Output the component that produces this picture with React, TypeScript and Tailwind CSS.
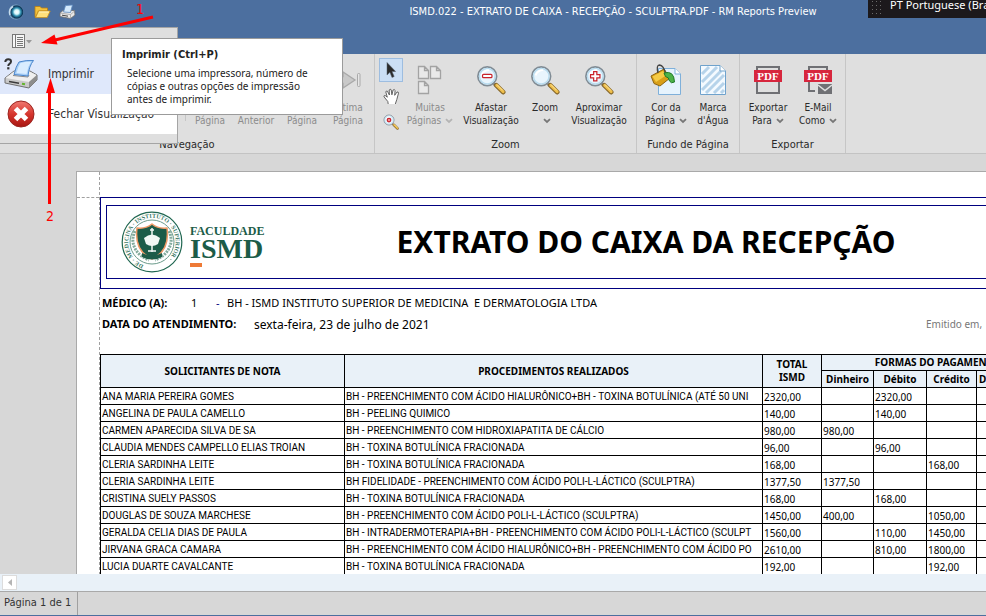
import type { ReactNode } from "react";

const UI = "font-['DejaVu_Sans_Condensed','DejaVu_Sans',sans-serif]";
const REPORT = "font-['Noto_Sans','Open_Sans',sans-serif]";

/* ---------- icons ---------- */

function Chevron({ muted = false }: { muted?: boolean }) {
  return (
    <svg width="8" height="6" viewBox="0 0 8 6" className="ml-1 inline-block" aria-hidden="true">
      <path d="M1 1.2L4 4L7 1.2" fill="none" stroke={muted ? "#b4b4b4" : "#777"} strokeWidth="1.8" />
    </svg>
  );
}

function OrbIcon() {
  return (
    <svg width="16" height="16" viewBox="0 0 16 16" aria-hidden="true">
      <defs>
        <radialGradient id="orb" cx="0.55" cy="0.5" r="0.5">
          <stop offset="0" stopColor="#fff" />
          <stop offset="0.3" stopColor="#d4f6fb" />
          <stop offset="0.55" stopColor="#2f8fae" />
          <stop offset="0.8" stopColor="#0d3558" />
          <stop offset="1" stopColor="#7fa8c8" />
        </radialGradient>
      </defs>
      <circle cx="8" cy="8" r="7.5" fill="url(#orb)" />
      <path d="M2 11Q0.500 5 5 2.500" fill="none" stroke="#c8dcec" strokeWidth="1.500" />
    </svg>
  );
}

function FolderIcon() {
  return (
    <svg width="17" height="16" viewBox="0 0 17 16" aria-hidden="true">
      <path d="M1 13V2.5H6L7.5 4H13.5V7H4.5L1.5 13.5Z" fill="#f3c23c" stroke="#b97f12" strokeWidth="0.8" />
      <path d="M4.5 7H16.2L13.2 13.6H1.6Z" fill="#ffe07a" stroke="#c98f1a" strokeWidth="0.8" />
      <path d="M5 8H14.8" stroke="#fff4c2" />
    </svg>
  );
}

function SmallPrinterIcon() {
  return (
    <svg width="17" height="16" viewBox="0 0 17 16" aria-hidden="true">
      <path d="M1 9L4 6.5H15.5L16 11L11.5 14.5L1 12.5Z" fill="#e8e8e8" stroke="#6d6d6d" strokeWidth="0.8" />
      <path d="M6.5 1.5L13.500 1L11.500 8.500L4.500 8Z" fill="#d5eafc" stroke="#5c88bd" strokeWidth="0.8" />
      <path d="M1 9L11.5 10.6L15.6 7M11.5 10.6V14.3" fill="none" stroke="#9a9a9a" strokeWidth="0.7" />
      <path d="M3 11.2L9 12.2" stroke="#444" />
    </svg>
  );
}

function PrinterIcon() {
  return (
    <svg width="34" height="32" viewBox="0 0 34 32" aria-hidden="true">
      <path d="M1 20L10 13H26L33 17V22L25 30L1 25Z" fill="#c9c9c9" stroke="#707070" />
      <path d="M1.500 20L10 13.500H25.500L32.500 17L25 24Z" fill="#efefef" />
      <path d="M25 24L33 17V22L25 30Z" fill="#8d8d8d" />
      <path d="M9 17.500L24 19L25 17" fill="none" stroke="#8a8a8a" />
      <path d="M15 4Q22 2 29.500 2.500Q25 8 24 18L10 16.500Q12 8 15 4Z" fill="#a9d0f7" stroke="#4a86cc" />
      <path d="M16.500 5Q22 3.500 27 3.800Q23.500 9 22.500 16L12.500 15Q14 8.500 16.500 5Z" fill="#d9edff" />
      <path d="M5 23.500L15 25.300" stroke="#3b3b3b" strokeWidth="1.500" />
      <path d="M18 25.700L21 26.200" stroke="#62b52c" strokeWidth="2" />
      <path d="M1.300 4Q1.500 1.300 4.200 1.300Q7 1.300 7 3.600Q7 5 5.500 5.900Q4.300 6.600 4.300 8" fill="none" stroke="#333" strokeWidth="2" />
      <rect x="3.200" y="9.200" width="2.200" height="2.200" fill="#333" />
    </svg>
  );
}

function CloseIcon() {
  return (
    <svg width="28" height="28" viewBox="0 0 28 28" aria-hidden="true">
      <defs>
        <linearGradient id="close" x1="0" y1="0" x2="0" y2="1">
          <stop offset="0" stopColor="#f07a72" />
          <stop offset="0.5" stopColor="#d6362e" />
          <stop offset="1" stopColor="#a81612" />
        </linearGradient>
      </defs>
      <circle cx="14" cy="14" r="13" fill="url(#close)" stroke="#9b2520" />
      <path d="M8.500 8.500L19.500 19.500M19.500 8.500L8.500 19.500" stroke="#fff" strokeWidth="5" />
    </svg>
  );
}

function DocumentListIcon() {
  return (
    <svg width="27" height="14" viewBox="0 0 27 14" aria-hidden="true">
      <rect x="0.500" y="0.500" width="12" height="13" fill="#f6f6f6" stroke="#777" />
      <path d="M3.500 1V13" stroke="#777" />
      <path d="M5 3.500H11M5 5.500H11M5 7.500H11M5 9.500H11M5 11.500H11" stroke="#777" />
      <path d="M14 6H20L17 9.500Z" fill="#999" />
    </svg>
  );
}

function NavArrowIcon({ flip = false, bar = false }: { flip?: boolean; bar?: boolean }) {
  return (
    <svg width="28" height="20" viewBox="0 0 28 20" className={flip ? "-scale-x-100" : ""} aria-hidden="true">
      <path d="M1 6.500H9V2L21 10L9 18V13.500H1Z" fill="#c9c9c9" stroke="#a9a9a9" strokeWidth="1.300" />
      {bar && <rect x="23.500" y="3.500" width="2.500" height="13" rx="1" fill="#e6e6e6" stroke="#a9a9a9" />}
    </svg>
  );
}

function PointerIcon() {
  return (
    <svg width="10" height="17" viewBox="0 0 10 17" aria-hidden="true">
      <path d="M1 0.500V13L3.900 10.300L6 15.500L8.200 14.500L6 9.500H9.600Z" fill="#2b2b2b" stroke="#55606e" strokeWidth="0.500" />
    </svg>
  );
}

function HandIcon() {
  return (
    <svg width="17" height="17" viewBox="0 0 17 17" aria-hidden="true">
      <path
        d="M5.200 16L4.800 13.500L1 8.800Q0.600 7.400 2.200 7.500L4.300 9.200L2.800 4Q3 2.500 4.400 3.200L6.400 7L6.200 2Q7 0.500 8.200 1.800L8.900 6.800L10.100 2Q11.300 0.800 12.100 2.400L11.700 7.300L14 4Q15.500 3.500 15.500 5.200L13.800 11.500L12.300 16"
        fill="#fff"
        stroke="#555"
        strokeWidth="0.900"
      />
    </svg>
  );
}

function Magnifier({ sign, size = 30 }: { sign?: "plus" | "minus" | "target"; size?: number }) {
  return (
    <svg width={size} height={size} viewBox="0 0 32 32" aria-hidden="true">
      <path d="M18 19L23 24" stroke="#8d8d8d" strokeWidth="3" />
      <path d="M21.500 21.500L29 29" stroke="#8a6a2c" strokeWidth="5" strokeLinecap="round" />
      <path d="M22 21.500L29 28.500" stroke="#f0c04c" strokeWidth="3" strokeLinecap="round" />
      <path d="M22.500 21L28.500 27" stroke="#fbe6a0" strokeWidth="1" />
      <circle cx="12" cy="12" r="10" fill="#e9f5fd" stroke="#808c95" strokeWidth="1.800" />
      <circle cx="12" cy="12" r="8.300" fill="none" stroke="#b9dcef" strokeWidth="1.500" />
      <path d="M6 11Q8 5.500 14 5.500" stroke="#fff" strokeWidth="2" fill="none" />
      {sign === "minus" && <rect x="7" y="10" width="10" height="3.500" rx="1" fill="#fff" stroke="#c9232b" strokeWidth="1.300" />}
      {sign === "plus" && (
        <path d="M10.300 7H13.700V10.300H17V13.700H13.700V17H10.300V13.700H7V10.300H10.300Z" fill="#fff" stroke="#c9232b" strokeWidth="1.300" />
      )}
      {sign === "target" && <circle cx="12" cy="12" r="3.500" fill="#f3a0a0" stroke="#c9232b" strokeWidth="2.500" />}
    </svg>
  );
}

function ManyPagesIcon() {
  const sheet = "M0.500 0.500H6.500L10.500 4.500V12.500H0.500ZM6.500 0.500V4.500H10.500";
  return (
    <svg width="26" height="30" viewBox="0 0 26 30" fill="#e9e9e9" stroke="#a3a3a3" strokeWidth="1.300" aria-hidden="true">
      <path d={sheet} transform="translate(1 1)" />
      <path d={sheet} transform="translate(13 1)" />
      <path d={sheet} transform="translate(1 16)" />
    </svg>
  );
}

function PageColorIcon() {
  return (
    <svg width="32" height="32" viewBox="0 0 32 32" aria-hidden="true">
      <path d="M8.500 4.500H25L30.500 10V30.500H8.500Z" fill="#e6f3fd" stroke="#7fb0da" />
      <path d="M25 4.500V10H30.500" fill="#fff" stroke="#7fb0da" />
      <path d="M1 12L14 5L20 14L10 22L4 19.500Z" fill="#d99f17" stroke="#8d6410" />
      <path d="M2.500 12.500L13 7L16 11.500L6 18Z" fill="#f5cb45" />
      <path d="M8 9Q6 1 9.500 1Q14 1.500 15.500 10" fill="none" stroke="#444" strokeWidth="1.300" />
      <path d="M14 9Q24 6 24.500 18Q21 20 19.500 17Q19 13 15.500 12.500Z" fill="#4db248" stroke="#1f7a26" />
    </svg>
  );
}

function WatermarkIcon() {
  return (
    <svg width="26" height="30" viewBox="0 0 26 30" aria-hidden="true">
      <path d="M0.500 0.500H20L25.500 6V29.500H0.500Z" fill="#f4faff" stroke="#6fa2cc" />
      <path d="M2 9L9 2M2 17L17 2M2 25L21 6M6 28L24 10M14 28L24 18M21 28L24 25" stroke="#b6d3ea" strokeWidth="3" />
      <path d="M20 0.500V6H25.500" fill="#fff" stroke="#6fa2cc" />
    </svg>
  );
}

function PdfIcon({ mail = false }: { mail?: boolean }) {
  return (
    <svg width="30" height="30" viewBox="0 0 30 30" aria-hidden="true">
      {mail ? (
        <>
          <path d="M6 6V2H24V6M6 16V26H12" fill="none" stroke="#6f7074" strokeWidth="2" />
          <path d="M15 19H29V29H15Z" fill="#6f7074" />
          <path d="M15 20L22 25.500L29 20" fill="none" stroke="#dfdfdf" strokeWidth="1.500" />
        </>
      ) : (
        <path d="M4 6V2H26V6M4 16V28H26V16" fill="none" stroke="#6f7074" strokeWidth="2" />
      )}
      <rect x="1" y="5" width="28" height="12" fill="#d7263d" />
      <text x="15" y="15" textAnchor="middle" fill="#fff" fontSize="11" fontWeight="bold" fontFamily="Liberation Serif">
        PDF
      </text>
    </svg>
  );
}

function Emblem() {
  return (
    <svg width="62" height="62" viewBox="0 0 62 62" role="img" aria-label="Instituto Superior de Medicina">
      <defs>
        <path id="ring" d="M22.600 54A24.500 24.500 0 0 1 39.400 8A24.500 24.500 0 0 1 22.600 54" />
      </defs>
      <circle cx="31" cy="31" r="29.800" fill="#fff" stroke="#1f6650" strokeWidth="1.200" />
      <circle cx="31" cy="31" r="22" fill="none" stroke="#6b9b8b" strokeWidth="1" />
      <text fill="#3b7a66" fontSize="6" fontWeight="bold" fontFamily="Liberation Serif">
        <textPath href="#ring">DE · MEDICINA · INSTITUTO · SUPERIOR ·</textPath>
      </text>
      <path d="M14 20Q8 33 19 44Q23 47 28 49M48 20Q54 33 43 44Q39 47 34 49" fill="none" stroke="#82ab9d" strokeWidth="3" strokeDasharray="2 1" />
      <path d="M31 13Q37 18 46 17Q49 40 31 48Q13 40 16 17Q25 18 31 13Z" fill="#1c5c48" stroke="#ee9a66" strokeWidth="1.500" />
      <path d="M23 27Q31 20 39 27L37 33Q31 37 25 33Z" fill="#f2f7f4" />
      <path d="M31 17V41M29 19H33M27 40H35" stroke="#f2f7f4" strokeWidth="1.500" />
      <path d="M21 42Q31 47 41 42V46Q31 51 21 46Z" fill="#1c5c48" />
    </svg>
  );
}

/* ---------- ribbon ---------- */

function RibbonGroup({ title, width, children }: { title: string; width: string; children: ReactNode }) {
  return (
    <section className={`flex flex-none flex-col border-r border-[#c6c6c6] ${width}`}>
      <div className="flex flex-1 gap-0.5 pt-1">{children}</div>
      <h2 className="h-4 text-center text-[11px] leading-4">{title}</h2>
    </section>
  );
}

type RibbonButtonProps = {
  icon: ReactNode;
  top: string;
  bottom?: string;
  width: string;
  menu?: boolean;
  disabled?: boolean;
};

function RibbonButton({ icon, top, bottom, width, menu, disabled }: RibbonButtonProps) {
  return (
    <button
      type="button"
      disabled={disabled}
      className={`flex flex-none flex-col items-center text-[10px] leading-[13px] whitespace-nowrap disabled:text-[#8c8c8c] ${width}`}
    >
      <span className="flex h-[43px] items-center">{icon}</span>
      <span>{top}</span>
      <span className="flex h-[13px] items-center">
        {bottom}
        {menu && <Chevron muted={disabled} />}
      </span>
    </button>
  );
}

function Ribbon() {
  return (
    <div className="flex h-[100px] flex-none border-b border-[#c3c3c3] bg-[#dfdfdf] text-[#2a2a2a]">
      <RibbonGroup title="Navegação" width="w-[375px]">
        <div className="mb-4 ml-auto w-px bg-[#c6c6c6]" />
        <RibbonButton width="w-11" disabled icon={<NavArrowIcon flip bar />} top="Primeira" bottom="Página" />
        <RibbonButton width="w-11" disabled icon={<NavArrowIcon flip />} top="Página" bottom="Anterior" />
        <RibbonButton width="w-11" disabled icon={<NavArrowIcon />} top="Próxima" bottom="Página" />
        <RibbonButton width="mr-1 w-11" disabled icon={<NavArrowIcon bar />} top="Última" bottom="Página" />
      </RibbonGroup>
      <RibbonGroup title="Zoom" width="w-[262px]">
        <div className="ml-1 flex w-6 flex-none flex-col items-center gap-0.5">
          <button type="button" aria-label="Ponteiro" className="flex h-6 w-6 items-center justify-center border border-[#9dbde0] bg-[#cbdff5]">
            <PointerIcon />
          </button>
          <button type="button" aria-label="Mão" className="flex h-6 w-6 items-center justify-center">
            <HandIcon />
          </button>
          <button type="button" aria-label="Lupa" className="flex h-6 w-6 items-center justify-center">
            <Magnifier sign="target" size={16} />
          </button>
        </div>
        <RibbonButton width="w-[50px]" disabled menu icon={<ManyPagesIcon />} top="Muitas" bottom="Páginas" />
        <RibbonButton width="w-[68px]" icon={<Magnifier sign="minus" />} top="Afastar" bottom="Visualização" />
        <RibbonButton width="w-9" menu icon={<Magnifier />} top="Zoom" />
        <RibbonButton width="w-[68px]" icon={<Magnifier sign="plus" />} top="Aproximar" bottom="Visualização" />
      </RibbonGroup>
      <RibbonGroup title="Fundo de Página" width="w-[103px]">
        <RibbonButton width="ml-1 w-[50px]" menu icon={<PageColorIcon />} top="Cor da" bottom="Página" />
        <RibbonButton width="w-10" icon={<WatermarkIcon />} top="Marca" bottom="d'Água" />
      </RibbonGroup>
      <RibbonGroup title="Exportar" width="w-[106px]">
        <RibbonButton width="ml-1 w-12" menu icon={<PdfIcon />} top="Exportar" bottom="Para" />
        <RibbonButton width="w-12" menu icon={<PdfIcon mail />} top="E-Mail" bottom="Como" />
      </RibbonGroup>
    </div>
  );
}

/* ---------- application menu and tooltip ---------- */

function AppMenu() {
  return (
    <div className="absolute top-[27px] left-0 w-[178px] border-t border-r border-b border-[#a5a5a5] bg-[#dfdfdf] pb-[9px] text-[12px] text-[#333]">
      <button type="button" aria-label="Menu" className="flex h-[26px] items-center pl-3">
        <DocumentListIcon />
      </button>
      <button type="button" className="flex h-10 w-full items-center bg-[#dfe8fb] pl-1">
        <PrinterIcon />
        <span className="pl-2.5">Imprimir</span>
      </button>
      <button type="button" className="flex h-10 w-full items-center bg-white pl-[7px] whitespace-nowrap">
        <CloseIcon />
        <span className="pl-[13px]">Fechar Visualização</span>
      </button>
    </div>
  );
}

function PrintTooltip() {
  return (
    <div role="tooltip" className="absolute top-[38px] left-[111px] w-[232px] border border-[#9b9b9b] bg-white px-2.5 pt-2 pb-2 text-[#222]">
      <p className="text-[11px] leading-4 font-bold">Imprimir (Ctrl+P)</p>
      <p className="pt-1 pl-[5px] font-['Noto_Sans',sans-serif] text-[10px] leading-[13px] whitespace-nowrap">
        Selecione uma impressora, número de
        <br />
        cópias e outras opções de impressão
        <br />
        antes de imprimir.
      </p>
    </div>
  );
}

function Annotations() {
  return (
    <svg width="170" height="230" viewBox="0 0 170 230" className="pointer-events-none absolute top-0 left-0" aria-hidden="true">
      <g stroke="#fe0000" strokeWidth="3" fill="#fe0000">
        <path d="M153 17L55 40" />
        <path d="M49.500 204V90" />
      </g>
      <path d="M41 43L54.500 34.500L57.500 44.500Z" fill="#fe0000" />
      <path d="M50.500 78L46 93H55Z" fill="#fe0000" />
      <g fill="#fe0000" fontSize="14" fontFamily="DejaVu Sans Condensed" textAnchor="middle">
        <text x="140" y="14">1</text>
        <text x="50" y="221">2</text>
      </g>
    </svg>
  );
}

/* ---------- report ---------- */

const rows: string[][] = [
  ["ANA MARIA PEREIRA GOMES", "BH - PREENCHIMENTO COM ÁCIDO HIALURÔNICO+BH - TOXINA BOTULÍNICA (ATÉ 50 UNI", "2320,00", "", "2320,00", ""],
  ["ANGELINA DE PAULA CAMELLO", "BH - PEELING QUIMICO", "140,00", "", "140,00", ""],
  ["CARMEN APARECIDA SILVA DE SA", "BH - PREENCHIMENTO COM HIDROXIAPATITA DE CÁLCIO", "980,00", "980,00", "", ""],
  ["CLAUDIA MENDES CAMPELLO ELIAS TROIAN", "BH - TOXINA BOTULÍNICA FRACIONADA", "96,00", "", "96,00", ""],
  ["CLERIA SARDINHA LEITE", "BH - TOXINA BOTULÍNICA FRACIONADA", "168,00", "", "", "168,00"],
  ["CLERIA SARDINHA LEITE", "BH FIDELIDADE - PREENCHIMENTO COM ÁCIDO POLI-L-LÁCTICO (SCULPTRA)", "1377,50", "1377,50", "", ""],
  ["CRISTINA SUELY PASSOS", "BH - TOXINA BOTULÍNICA FRACIONADA", "168,00", "", "168,00", ""],
  ["DOUGLAS DE SOUZA MARCHESE", "BH - PREENCHIMENTO COM ÁCIDO POLI-L-LÁCTICO (SCULPTRA)", "1450,00", "400,00", "", "1050,00"],
  ["GERALDA CELIA DIAS DE PAULA", "BH - INTRADERMOTERAPIA+BH - PREENCHIMENTO COM ÁCIDO POLI-L-LÁCTICO (SCULPT", "1560,00", "", "110,00", "1450,00"],
  ["JIRVANA GRACA CAMARA", "BH - PREENCHIMENTO COM ÁCIDO HIALURÔNICO+BH - PREENCHIMENTO COM ÁCIDO PO", "2610,00", "", "810,00", "1800,00"],
  ["LUCIA DUARTE CAVALCANTE", "BH - TOXINA BOTULÍNICA FRACIONADA", "192,00", "", "", "192,00"],
];

function ReportTable() {
  const head = "border border-black p-0 font-bold";
  return (
    <table className="w-[954px] table-fixed border-collapse text-[10px] text-black">
      <colgroup>
        <col className="w-[244px]" />
        <col className="w-[418px]" />
        <col className="w-[59px]" />
        <col className="w-[52px]" />
        <col className="w-[53px]" />
        <col className="w-[50px]" />
        <col />
      </colgroup>
      <thead className="bg-[#e9f1f8] leading-[13px]">
        <tr className="h-4">
          <th rowSpan={2} className={head}>SOLICITANTES DE NOTA</th>
          <th rowSpan={2} className={head}>PROCEDIMENTOS REALIZADOS</th>
          <th rowSpan={2} className={head}>TOTAL<br />ISMD</th>
          <th colSpan={4} className={head}>FORMAS DO PAGAMENTO</th>
        </tr>
        <tr className="h-[17px]">
          <th className={head}>Dinheiro</th>
          <th className={head}>Débito</th>
          <th className={head}>Crédito</th>
          <th className={`${head} pl-0.5 text-left`}>Depósito</th>
        </tr>
      </thead>
      <tbody>
        {rows.map((row, i) => (
          <tr key={i} className="h-[17px]">
            {row.map((cell, j) => (
              <td
                key={j}
                className={`overflow-hidden border border-black p-0 pt-0.5 pl-px leading-[14px] whitespace-nowrap ${j < 2 ? "font-['Roboto',sans-serif]" : ""}`}
              >
                {cell}
              </td>
            ))}
            <td className="border border-black p-0" />
          </tr>
        ))}
      </tbody>
    </table>
  );
}

function ReportPage() {
  return (
    <article className={`flex w-[1130px] flex-none border-t border-l border-[#a9a9a9] bg-white text-black ${REPORT}`}>
      <div className="w-[23px] flex-none border-r border-dashed border-[#a0a0a0]">
        <div className="h-[26px] border-b border-dashed border-[#a0a0a0]" />
      </div>
      <div className="flex-none pt-[25px]">
        <header className="h-[92px] w-[1092px] border border-[#00007f] px-[5px] pt-[7px]">
          <div className="grid h-[74px] grid-cols-[160px_1fr_160px] items-center border border-[#00007f]">
            <div className="flex items-center gap-[7px] pl-3.5">
              <Emblem />
              <div className="font-['Liberation_Serif',serif] text-[#1c5c48]">
                <div className="pt-2 text-[12px] leading-3 font-bold">FACULDADE</div>
                <div className="text-[28px] leading-6 font-bold">ISMD</div>
                <div className="mt-0.5 h-1 w-3 bg-[#ee7a36]" />
              </div>
            </div>
            <h1 className="text-center text-[30px] leading-9 font-bold">EXTRATO DO CAIXA DA RECEPÇÃO</h1>
          </div>
        </header>
        <div className="flex h-[21px] items-center pt-2 pl-0.5 text-[11px] whitespace-nowrap">
          <b className="w-[89px]">MÉDICO (A):</b>
          <span className="w-[25px]">1</span>
          <span className="w-[11px] text-[#00007f]">-</span>
          <span>BH - ISMD INSTITUTO SUPERIOR DE MEDICINA &nbsp;E DERMATOLOGIA LTDA</span>
        </div>
        <div className="flex h-[21px] items-center pt-2 pl-0.5 text-[11px] whitespace-nowrap">
          <b className="w-[152px]">DATA DO ATENDIMENTO:</b>
          <span className="w-[672px] text-[12px]">sexta-feira, 23 de julho de 2021</span>
          <span className="text-[10px] text-[#777]">Emitido em,</span>
        </div>
        <div className="pt-[23px]">
          <ReportTable />
        </div>
      </div>
    </article>
  );
}

/* ---------- window ---------- */

export default function App() {
  return (
    <div className={`relative flex h-screen flex-col overflow-hidden bg-[#d7d7d7] ${UI}`}>
      <header className="flex h-[54px] flex-none items-start bg-[#4c6f9f]">
        <div className="flex w-[240px] flex-none items-center gap-2 pt-1 pl-2">
          <button type="button" aria-label="Aplicativo"><OrbIcon /></button>
          <button type="button" aria-label="Abrir" className="ml-0.5"><FolderIcon /></button>
          <button type="button" aria-label="Impressão rápida"><SmallPrinterIcon /></button>
        </div>
        <div className="flex-1 text-center text-[11px] leading-6 whitespace-nowrap text-white">
          ISMD.022 - EXTRATO DE CAIXA - RECEPÇÃO - SCULPTRA.PDF - RM Reports Preview
        </div>
      </header>

      <Ribbon />

      <main className="min-h-0 flex-1 overflow-hidden pt-[17px] pl-[76px]">
        <ReportPage />
      </main>

      <div className="flex h-[17px] flex-none items-start bg-[#e9f1f8] pt-px pl-0.5">
        <button type="button" aria-label="Rolar para a esquerda" className="flex h-[15px] w-[15px] items-center justify-center border border-[#dcdcdc] bg-white">
          <svg width="4" height="7" viewBox="0 0 4 7" aria-hidden="true">
            <path d="M4 0V7L0 3.500Z" fill="#b5b5b5" />
          </svg>
        </button>
      </div>
      <footer className="flex h-[25px] flex-none border-t border-b border-t-[#a9a9a9] border-b-[#4c6f9f] text-[11px] text-[#333]">
        <div className="flex w-[78px] items-center border-r border-[#a0a0a0] pl-1 whitespace-nowrap">Página 1 de 1</div>
      </footer>

      <div className="absolute top-0 right-0 flex h-[18px] w-[118px] items-start gap-[9px] overflow-hidden bg-[#1c191c] pl-1 text-white">
        <svg width="9" height="14" viewBox="0 0 9 14" className="flex-none" aria-hidden="true">
          <path d="M0 1.500H9M0 5.500H9M0 9.500H9M0 13.500H9" stroke="#6a6a6a" strokeDasharray="1 3" />
        </svg>
        <span className="-mt-1 font-['Noto_Sans',sans-serif] text-[11px] leading-[18px] whitespace-nowrap">PT Portuguese (Brazil)</span>
      </div>

      <AppMenu />
      <PrintTooltip />
      <Annotations />
    </div>
  );
}
